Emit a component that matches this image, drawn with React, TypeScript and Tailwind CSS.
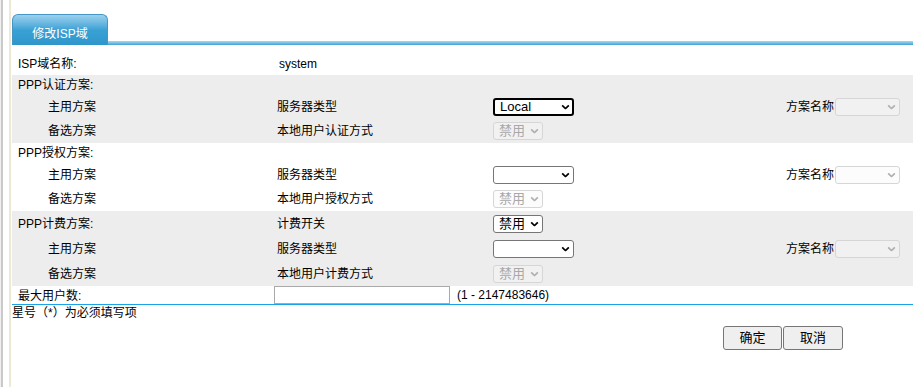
import React from "react";

type Variant = "focus" | "normal" | "disabled";

function Chevron({ muted }: { muted?: boolean }) {
  return (
    <svg
      viewBox="0 0 10 6"
      className="pointer-events-none absolute right-[4px] top-1/2 h-[5px] w-[9px] -translate-y-1/2"
      fill="none"
      stroke={muted ? "#b0b0b0" : "#000"}
      strokeWidth={2}
    >
      <path d="M1 1 L5 5 L9 1" />
    </svg>
  );
}

function Sel({ width, value, variant }: { width: string; value?: string; variant: Variant }) {
  const base =
    "appearance-none h-[18px] rounded-[3px] pl-[5px] text-[13px] leading-[14px] outline-none";
  const tone =
    variant === "focus"
      ? "border-2 border-black bg-white text-black"
      : variant === "normal"
        ? "border border-[#767676] bg-white text-black"
        : "border border-[#d6d6d6] bg-[#f7f7f7]/40 text-[#a8a8a8]";
  return (
    <div className="relative inline-flex">
      <select disabled={variant === "disabled"} className={`${base} ${tone} ${width}`} defaultValue={value ?? ""}>
        <option value={value ?? ""}>{value ?? ""}</option>
      </select>
      <Chevron muted={variant === "disabled"} />
    </div>
  );
}

function Header({ label, h = "h-[20px]", mid, sel }: { label: string; h?: string; mid?: string; sel?: React.ReactNode }) {
  return (
    <div className={`flex items-center ${h}`}>
      <div className="w-[265px] shrink-0 pl-[6px]">{label}</div>
      <div className="w-[216px] shrink-0">{mid}</div>
      <div className="w-[293px] shrink-0">{sel}</div>
    </div>
  );
}

function Row({ label, mid, sel, plan, h = "h-[24px]" }: { label: string; mid: string; sel: React.ReactNode; plan?: boolean; h?: string }) {
  return (
    <div className={`flex items-center ${h}`}>
      <div className="w-[265px] shrink-0 pl-[36px]">{label}</div>
      <div className="w-[216px] shrink-0">{mid}</div>
      <div className="w-[293px] shrink-0">{sel}</div>
      {plan && (
        <div className="flex items-center gap-[1px]">
          <span>方案名称</span>
          <Sel width="w-[65px]" variant="disabled" />
        </div>
      )}
    </div>
  );
}

export default function App() {
  return (
    <div
      className="flex h-[387px] w-[913px] overflow-hidden bg-white text-[12px] text-black"
      style={{ fontFamily: '"Liberation Sans", "Noto Sans CJK SC", sans-serif' }}
    >
      {/* left frame edge */}
      <div className="w-[1px] shrink-0 bg-[#f0f0f0]" />
      <div className="w-[2px] shrink-0 bg-[#c9c9c9]" />
      <div className="w-[6px] shrink-0 bg-white" />
      <div className="w-[2px] shrink-0 bg-[#ece9d8]" />
      <div className="w-[1px] shrink-0 bg-white" />

      <div className="flex min-w-0 flex-1 flex-col">
        {/* tab strip */}
        <div className="mt-[14px] flex h-[31px] items-end">
          <div className="flex h-[31px] w-[96px] shrink-0 justify-center rounded-t-[6px] border border-b-0 border-[#4696c4] bg-gradient-to-b from-[#9ad2ee] via-[#3aa1d5] to-[#2f96cb] pt-[10px] text-white">
            修改ISP域
          </div>
          <div className="h-[4px] flex-1 bg-gradient-to-b from-[#a9d8f0] to-[#3aa3d8]" />
        </div>

        <div className="mt-[8px] flex h-[22px] items-center">
          <div className="w-[265px] shrink-0 pl-[6px]">ISP域名称:</div>
          <div className="pl-[2px]">system</div>
        </div>

        <div className="bg-[#ededed]">
          <Header label="PPP认证方案:" />
          <Row label="主用方案" mid="服务器类型" sel={<Sel width="w-[81px]" value="Local" variant="focus" />} plan />
          <Row label="备选方案" mid="本地用户认证方式" sel={<Sel width="w-[50px]" value="禁用" variant="disabled" />} />
        </div>

        <div className="bg-white">
          <Header label="PPP授权方案:" />
          <Row label="主用方案" mid="服务器类型" sel={<Sel width="w-[81px]" variant="normal" />} plan />
          <Row label="备选方案" mid="本地用户授权方式" sel={<Sel width="w-[50px]" value="禁用" variant="disabled" />} />
        </div>

        <div className="bg-[#ededed]">
          <Header
            label="PPP计费方案:"
            h="h-[25px]"
            mid="计费开关"
            sel={<Sel width="w-[50px]" value="禁用" variant="normal" />}
          />
          <Row h="h-[25px]" label="主用方案" mid="服务器类型" sel={<Sel width="w-[81px]" variant="normal" />} plan />
          <Row h="h-[25px]" label="备选方案" mid="本地用户计费方式" sel={<Sel width="w-[50px]" value="禁用" variant="disabled" />} />
        </div>

        <div className="flex h-[18px] items-center border-b border-[#19a3e8] box-content">
          <div className="w-[262px] shrink-0 pl-[6px] pt-[2px]">最大用户数:</div>
          <input className="h-[18px] w-[176px] border border-[#a9a9a9] bg-white outline-none" />
          <span className="pl-[7px]">(1 - 2147483646)</span>
        </div>

        <div className="h-[16px] leading-[16px]">星号（*）为必须填写项</div>

        <div className="mt-[5px] flex justify-end gap-[1px] pr-[70px]">
          <button className="h-[24px] w-[59px] rounded-[3px] border border-[#767676] bg-[#efefef] text-[13px]">确定</button>
          <button className="h-[24px] w-[60px] rounded-[3px] border border-[#767676] bg-[#efefef] text-[13px]">取消</button>
        </div>
      </div>
    </div>
  );
}
